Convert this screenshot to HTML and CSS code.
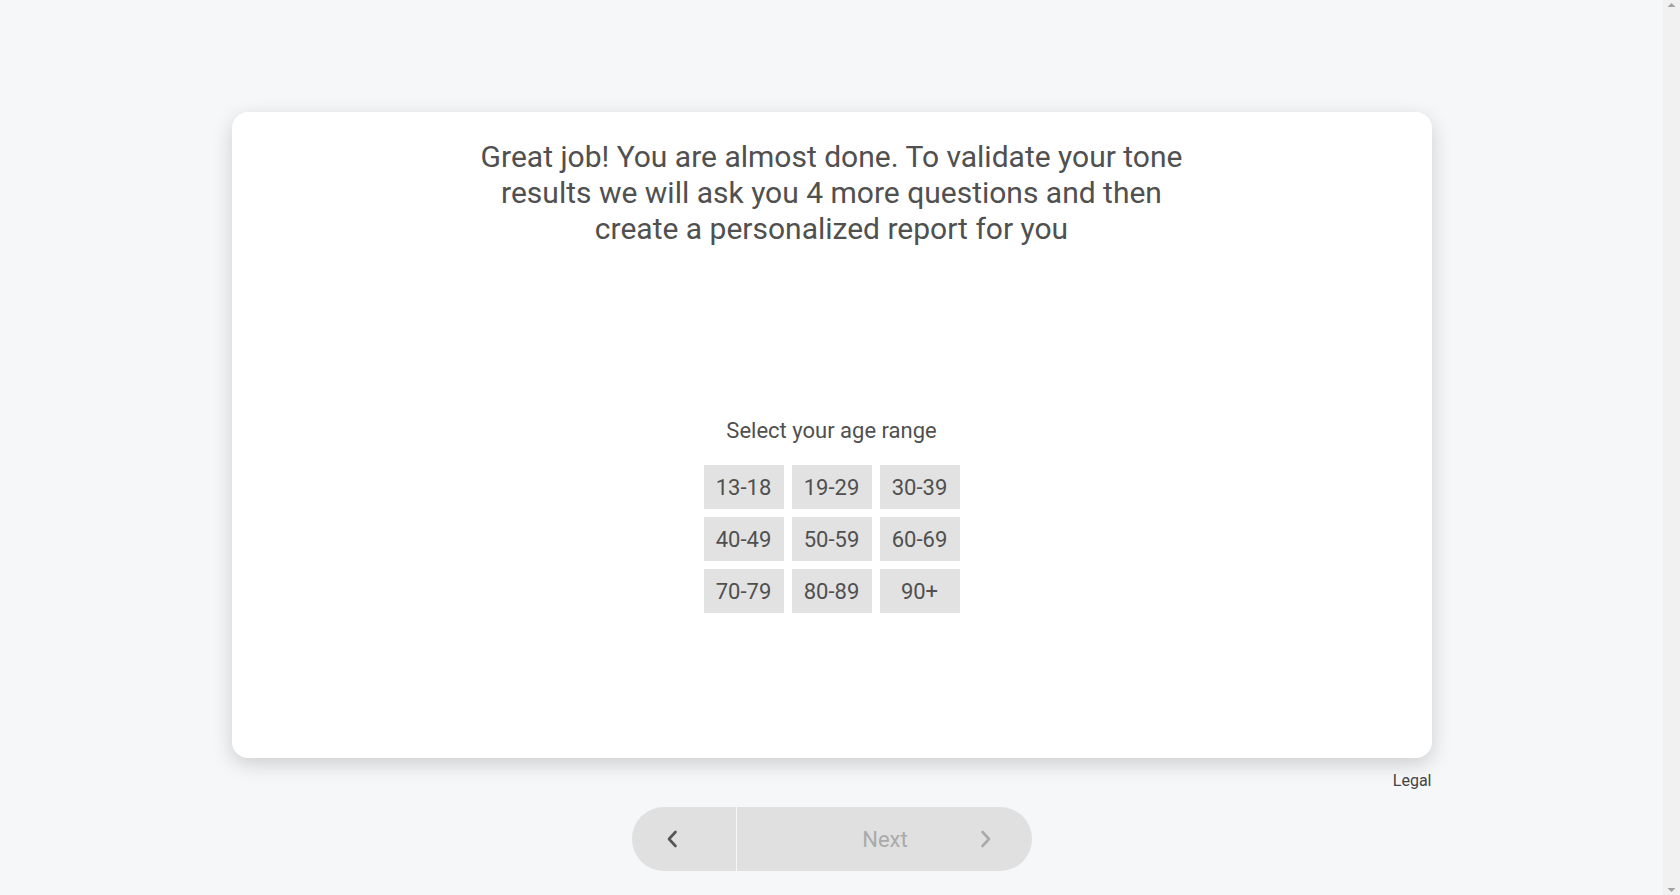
FILE: index.html
```html
<!DOCTYPE html>
<html lang="en">
<head>
<meta charset="utf-8">
<title>Age range</title>
<link rel="stylesheet" href="styles.css">
</head>
<body>
<main class="viewport">
  <div class="page">
    <section class="card">
      <h1 class="title">Great job! You are almost done. To validate your tone results we will ask you 4 more questions and then create a personalized report for you</h1>
      <div class="question">
        <p class="prompt">Select your age range</p>
        <div class="options">
          <button class="opt">13-18</button>
          <button class="opt">19-29</button>
          <button class="opt">30-39</button>
          <button class="opt">40-49</button>
          <button class="opt">50-59</button>
          <button class="opt">60-69</button>
          <button class="opt">70-79</button>
          <button class="opt">80-89</button>
          <button class="opt">90+</button>
        </div>
      </div>
    </section>
    <div class="legal-row"><a class="legal">Legal</a></div>
    <nav class="nav">
      <button class="nav-back" aria-label="Back">
        <svg width="12" height="18" viewBox="0 0 12 18"><path d="M9.5 2 L3 9 L9.5 16" fill="none" stroke="#555" stroke-width="2.6" stroke-linecap="round" stroke-linejoin="round"/></svg>
      </button>
      <button class="nav-next">
        <span class="next-label">Next</span>
        <svg class="next-icon" width="12" height="18" viewBox="0 0 12 18"><path d="M2.5 2 L9 9 L2.5 16" fill="none" stroke="#aaa" stroke-width="2.6" stroke-linecap="round" stroke-linejoin="round"/></svg>
      </button>
    </nav>
  </div>
</main>
<aside class="scrollbar" aria-hidden="true">
  <svg width="17" height="17" viewBox="0 0 17 17"><path d="M4.5 7 L8.5 3 L12.5 7 Z" fill="#a3a3a3"/></svg>
  <svg width="17" height="17" viewBox="0 0 17 17"><path d="M4.5 10 L8.5 14 L12.5 10 Z" fill="#a3a3a3"/></svg>
</aside>
</body>
</html>
```
FILE: styles.css
```css
html {
  overflow: hidden;
}
body {
  margin: 0;
  background: #f6f7f9;
  font-family: Roboto, "Liberation Sans", sans-serif;
  color: #505050;
  display: flex;
  height: 100vh;
}
.viewport {
  flex: 1;
  min-width: 0;
}
.scrollbar {
  width: 17px;
  flex: none;
  background: #f1f1f1;
  display: flex;
  flex-direction: column;
  justify-content: space-between;
}
.scrollbar svg {
  display: block;
}
.page {
  width: 1200px;
  margin: 0 auto;
  padding-top: 112px;
}
.card {
  background: #fff;
  border-radius: 16px;
  box-shadow: 0 6px 20px rgba(0, 0, 0, 0.17);
  height: 646px;
  box-sizing: border-box;
  padding-top: 27px;
  display: flex;
  flex-direction: column;
  align-items: center;
}
.title {
  margin: 0;
  max-width: 720px;
  font-size: 30px;
  line-height: 36px;
  font-weight: 400;
  text-align: center;
  color: #505050;
}
.question {
  margin-top: 171px;
  display: flex;
  flex-direction: column;
  align-items: center;
}
.prompt {
  margin: 0;
  font-size: 22px;
  line-height: 26px;
  color: #505050;
}
.options {
  margin-top: 21px;
  display: grid;
  grid-template-columns: repeat(3, 80px);
  grid-auto-rows: 44px;
  gap: 8px;
}
.opt {
  border: none;
  background: #e2e2e2;
  font-family: Roboto, "Liberation Sans", sans-serif;
  font-size: 22px;
  color: #505050;
  padding: 0;
  cursor: pointer;
}
.legal-row {
  display: flex;
  justify-content: flex-end;
  padding-top: 14px;
}
.legal {
  font-size: 16px;
  line-height: 18px;
  color: #444;
}
.nav {
  margin-top: 17px;
  display: flex;
  justify-content: center;
}
.nav-back,
.nav-next {
  border: none;
  background: #e0e0e0;
  height: 64px;
  padding: 0;
  display: flex;
  align-items: center;
  box-sizing: border-box;
  font-family: Roboto, "Liberation Sans", sans-serif;
}
.nav-back {
  width: 104px;
  border-radius: 32px 0 0 32px;
  justify-content: flex-start;
  padding-left: 34px;
}
.nav-next {
  width: 295px;
  margin-left: 1px;
  border-radius: 0 32px 32px 0;
  justify-content: center;
  padding-left: 86px;
}
.next-label {
  font-size: 22px;
  color: #aaa;
}
.next-icon {
  margin-left: 72px;
}
```
